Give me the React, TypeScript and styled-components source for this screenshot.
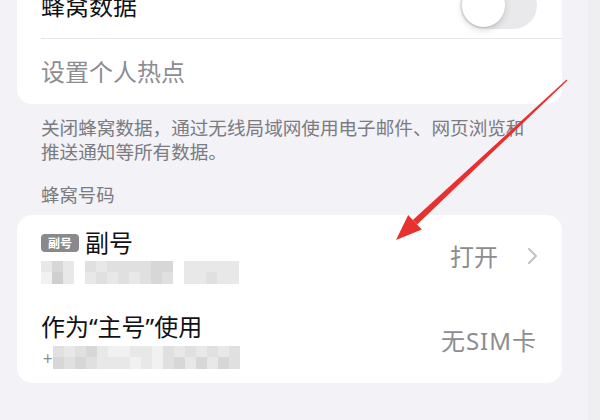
import React from 'react';
import styled, { createGlobalStyle } from 'styled-components';

const GlobalStyle = createGlobalStyle`
  html, body {
    margin: 0;
    padding: 0;
  }
  body {
    width: 600px;
    height: 420px;
    overflow: hidden;
    background: linear-gradient(to right, #f2f2f7 588px, #efeff1 588px);
    font-family: "Noto Sans CJK SC", "Noto Sans", sans-serif;
  }
`;

const Page = styled.div`
  position: relative;
  width: 600px;
  height: 420px;
  overflow: hidden;
`;

const Column = styled.div`
  width: 545px;
  margin-left: 17px;
  display: flex;
  flex-direction: column;
`;

const Card = styled.div<{ $cutTop?: boolean }>`
  background: #ffffff;
  border-radius: ${(p) => (p.$cutTop ? '0 0 15px 15px' : '15px')};
  margin-top: ${(p) => (p.$cutTop ? '-28px' : '0')};
  overflow: hidden;
`;

const Row = styled.div<{ $height?: number; $pad?: string }>`
  position: relative;
  display: flex;
  align-items: center;
  justify-content: space-between;
  height: ${(p) => (p.$height ? `${p.$height}px` : 'auto')};
  padding: ${(p) => p.$pad || '0'};
  padding-left: 24px;
  box-sizing: border-box;
  & + & {
    &::before {
      content: '';
      position: absolute;
      top: 0;
      left: 24px;
      right: 0;
      height: 1px;
      background: #e6e6ea;
    }
  }
`;

const Label = styled.span<{ $muted?: boolean }>`
  font-family: "Noto Sans", "Noto Sans CJK SC", sans-serif;
  font-size: 24px;
  line-height: 29px;
  color: ${(p) => (p.$muted ? '#8d8d91' : '#111114')};
`;

const Toggle = styled.div`
  position: relative;
  width: 77px;
  height: 47px;
  margin-right: 25px;
  border-radius: 24px;
  background: #e9e9eb;
`;

const Knob = styled.div`
  position: absolute;
  left: 2px;
  top: 2px;
  width: 43px;
  height: 43px;
  border-radius: 50%;
  background: #ffffff;
  box-shadow: 0 3px 7px rgba(0, 0, 0, 0.15), 0 1px 1px rgba(0, 0, 0, 0.08);
`;

const Footer = styled.p`
  margin: 11px 0 0;
  padding: 0 24px;
  font-size: 18.6px;
  line-height: 23.5px;
  color: #7b7b80;
`;

const SectionHeader = styled.div`
  margin: 21px 0 9px;
  padding: 0 24px;
  font-size: 18.4px;
  line-height: 23px;
  color: #7b7b80;
`;

const Left = styled.div`
  display: flex;
  flex-direction: column;
`;

const TitleLine = styled.div`
  display: flex;
  align-items: center;
  gap: 6px;
`;

const Badge = styled.span`
  display: inline-flex;
  align-items: center;
  justify-content: center;
  width: 38px;
  height: 18px;
  border-radius: 4px;
  background: #8a8a8e;
  color: #ffffff;
  font-size: 12px;
  font-weight: 600;
  line-height: 1;
`;

const Right = styled.div<{ $pad: number; $spacing?: number }>`
  display: flex;
  align-items: center;
  gap: 29px;
  margin-right: ${(p) => p.$pad}px;
  color: #8d8d91;
  font-family: "Noto Sans", "Noto Sans CJK SC", sans-serif;
  font-size: 24px;
  line-height: 29px;
  letter-spacing: ${(p) => p.$spacing || 0}px;
`;

const Mosaic = styled.div<{ $top: number }>`
  display: flex;
  align-items: center;
  margin-top: ${(p) => p.$top}px;
  height: 23px;
`;

const Plus = styled.span`
  font-size: 17px;
  color: #8d8d91;
  width: 10px;
  margin-left: 2px;
  line-height: 1;
`;

const Cells = styled.div<{ $cols: number }>`
  display: grid;
  grid-template-columns: repeat(${(p) => p.$cols}, 11px);
  grid-template-rows: 11px 12px;
`;

const Cell = styled.span<{ $shade: string }>`
  background: ${(p) => p.$shade};
`;

const Arrow = styled.svg`
  position: absolute;
  left: 0;
  top: 0;
  pointer-events: none;
`;

const Chevron = () => (
  <svg width="11" height="18" viewBox="0 0 11 18">
    <path d="M2 2 L9 9 L2 16" fill="none" stroke="#c2c2c6" strokeWidth="2" strokeLinecap="round" strokeLinejoin="round" />
  </svg>
);

const shades: Record<string, string> = {
  w: '#ffffff',
  a: '#f1f1f1',
  b: '#e8e8e8',
  c: '#e0e0e0',
  d: '#d7d7d7',
  e: '#cfcfcf',
};

const mosaicA = ['bdbwcbccccddwbbbbb', 'aebwbcbcbcdcwbbcbb'];
const mosaicB = ['cbcdbaabbacbcbcbc', 'dcdcbbbabacdbdbdc'];

function Blur({ rows, top, plus }: { rows: string[]; top: number; plus?: boolean }) {
  const cols = rows[0].length;
  return (
    <Mosaic $top={top}>
      {plus && <Plus>+</Plus>}
      <Cells $cols={cols}>
        {rows.flatMap((r, ri) =>
          r.split('').map((ch, ci) => <Cell key={`${ri}-${ci}`} $shade={shades[ch]} />)
        )}
      </Cells>
    </Mosaic>
  );
}

export default function App() {
  return (
    <Page>
      <GlobalStyle />
      <Column>
        <Card $cutTop>
          <Row $height={66}>
            <Label>蜂窝数据</Label>
            <Toggle>
              <Knob />
            </Toggle>
          </Row>
          <Row $height={66}>
            <Label $muted>设置个人热点</Label>
          </Row>
        </Card>
        <Footer>
          关闭蜂窝数据，通过无线局域网使用电子邮件、网页浏览和
          <br />
          推送通知等所有数据。
        </Footer>
        <SectionHeader>蜂窝号码</SectionHeader>
        <Card>
          <Row $pad="13px 0 14px">
            <Left>
              <TitleLine>
                <Badge>副号</Badge>
                <Label>副号</Label>
              </TitleLine>
              <Blur rows={mosaicA} top={4} />
            </Left>
            <Right $pad={24}>
              <span>打开</span>
              <Chevron />
            </Right>
          </Row>
          <Row $pad="14px 0 14px">
            <Left>
              <Label>作为“主号”使用</Label>
              <Blur rows={mosaicB} top={5} plus />
            </Left>
            <Right $pad={25} $spacing={1}>
              <span>无SIM卡</span>
            </Right>
          </Row>
        </Card>
      </Column>
      <Arrow width="600" height="420" viewBox="0 0 600 420">
        <polygon
          points="567.4,80.4 566.6,79.6 412.8,219.9 417.2,224.5"
          fill="#e8302f"
        />
        <polygon points="396,240 421.8,229.5 408.2,214.9" fill="#e8302f" />
      </Arrow>
    </Page>
  );
}
